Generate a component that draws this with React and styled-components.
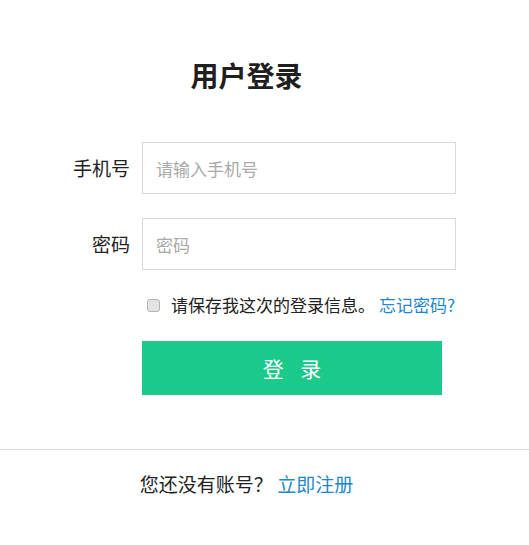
import React from "react";
import styled, { createGlobalStyle } from "styled-components";

const Global = createGlobalStyle`
  html, body { margin: 0; padding: 0; background: #fff; }
  body {
    font-family: "Noto Sans CJK SC", "Liberation Sans", sans-serif;
    color: #222;
  }
  * { box-sizing: border-box; }
`;

const Page = styled.div`
  width: 529px;
  padding-top: 59px;
`;

const Content = styled.div`
  width: 493px;
`;

const Title = styled.h1`
  margin: 0;
  font-size: 28px;
  line-height: 32px;
  font-weight: 700;
  text-align: center;
  color: #1f1f1f;
`;

const Form = styled.form`
  margin-top: 51px;
  display: grid;
  grid-template-columns: 130px 314px;
  column-gap: 12px;
  row-gap: 24px;
  align-items: center;
`;

const Label = styled.label`
  font-size: 19px;
  line-height: 24px;
  text-align: right;
  color: #222;
`;

const Input = styled.input`
  width: 314px;
  height: 52px;
  border: 1px solid #d9d9d9;
  padding: 0 13px;
  font-family: inherit;
  font-size: 17px;
  color: #333;
  outline: none;
  background: #fff;
  &::placeholder { color: #a9a9a9; }
`;

const RememberRow = styled.div`
  grid-column: 2;
  display: flex;
  align-items: center;
  margin-top: 1px;
  font-size: 17px;
  line-height: 20px;
  white-space: nowrap;
`;

const Check = styled.input`
  appearance: none;
  width: 13px;
  height: 13px;
  margin: 0 11px 0 5px;
  border: 1px solid #b4b4b4;
  border-radius: 3px;
  background: #e3e3e3;
`;

const Link = styled.a`
  color: #1e88c8;
  text-decoration: none;
  margin-left: ${(p) => p.$gap || 0}px;
`;

const Button = styled.button`
  grid-column: 2;
  margin-top: 2px;
  width: 300px;
  height: 54px;
  border: none;
  background: #1bc98a;
  color: #fff;
  font-family: inherit;
  font-size: 21px;
  letter-spacing: 6px;
  padding: 0 0 0 6px;
`;

const Divider = styled.hr`
  margin: 54px 0 0 0;
  border: none;
  border-top: 1px solid #dcdcdc;
  width: 529px;
`;

const Footer = styled.p`
  width: 493px;
  margin: 22px 0 0 0;
  font-size: 19px;
  line-height: 24px;
  text-align: center;
  color: #222;
`;

export default function App() {
  return (
    <Page>
      <Global />
      <Content>
        <Title>用户登录</Title>
        <Form onSubmit={(e) => e.preventDefault()}>
          <Label>手机号</Label>
          <Input type="text" placeholder="请输入手机号" />
          <Label>密码</Label>
          <Input type="password" placeholder="密码" />
          <RememberRow>
            <Check type="checkbox" />
            <span>请保存我这次的登录信息。</span>
            <Link href="#" $gap={4}>忘记密码?</Link>
          </RememberRow>
          <Button type="submit">登 录</Button>
        </Form>
      </Content>
      <Divider />
      <Footer>
        您还没有账号？ <Link href="#">立即注册</Link>
      </Footer>
    </Page>
  );
}
